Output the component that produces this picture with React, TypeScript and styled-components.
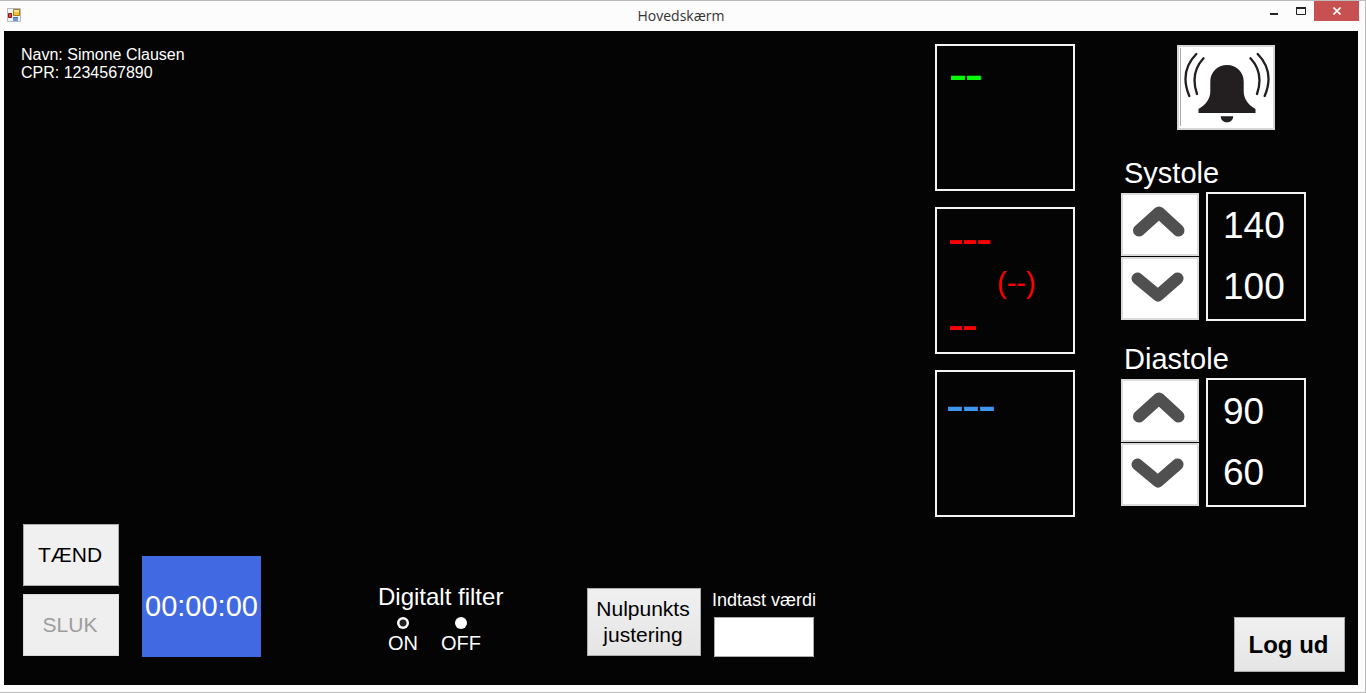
import React, { useState } from "react";
import styled, { createGlobalStyle } from "styled-components";

const GlobalStyle = createGlobalStyle`
  *, *::before, *::after { box-sizing: border-box; }
  body { margin: 0; background: #fcfcfc; }
  body, button, input { font-family: "Liberation Sans", Arial, sans-serif; }
`;

const Window = styled.div`
  display: flex;
  flex-direction: column;
  min-height: 100vh;
  padding: 0 7px 7px 4px;
  background: #fcfcfc;
  border: solid #bcbcbc;
  border-width: 1px 1px 1px 0;
`;

const TitleBar = styled.header`
  display: grid;
  grid-template-columns: 1fr auto 1fr;
  height: 30px;
  margin-right: -1px;
  padding-left: 3px;
`;

const AppIcon = styled.svg`
  width: 14px;
  height: 14px;
  margin-top: 7px;
`;

const Title = styled.h1`
  margin: 0;
  padding-right: 4px;
  font: 400 14px/30px "Open Sans", "Noto Sans", sans-serif;
  color: #333;
`;

const WindowControls = styled.div`
  display: flex;
  justify-content: flex-end;
`;

const ControlButton = styled.button<{ $close?: boolean }>`
  display: flex;
  align-items: center;
  justify-content: center;
  width: ${(p) => (p.$close ? 45 : 27)}px;
  height: 20px;
  padding: 0;
  border: 0;
  background: ${(p) => (p.$close ? "#c75050" : "transparent")};
`;

const Client = styled.main`
  flex: 1;
  display: flex;
  flex-direction: column;
  justify-content: space-between;
  gap: 6px;
  padding: 13px 13px 13px 17px;
  background: #040404;
  color: #fff;
`;

const Monitor = styled.section`
  display: flex;
  align-items: flex-start;
  padding-right: 39px;
`;

const Patient = styled.div`
  flex: 1;
  padding-top: 2px;
  font-size: 16px;
  line-height: 18px;
`;

const Vitals = styled.div`
  display: flex;
  flex-direction: column;
  gap: 16px;
  margin-right: 46px;
`;

const VitalBox = styled.div<{ $color: string; $top: number; $left: number }>`
  width: 140px;
  height: 147px;
  padding: ${(p) => p.$top}px 0 0 ${(p) => p.$left}px;
  border: 2px solid #f4f4f4;
  color: ${(p) => p.$color};
`;

const Reading = styled.div<{ $size: number }>`
  font-family: Roboto, sans-serif;
  font-size: ${(p) => p.$size}px;
  line-height: 43px;
`;

const MeanReading = styled.div`
  padding-left: 48px;
  font-size: 29px;
  line-height: 43px;
`;

const Limits = styled.div`
  display: flex;
  flex-direction: column;
  width: 185px;
`;

const AlarmButton = styled.button`
  align-self: flex-end;
  width: 98px;
  height: 85px;
  margin: 1px 31px 25px 0;
  padding: 0;
  border: 2px solid #d6d6d6;
  background: #fff;

  svg { display: block; }
`;

const LimitGroup = styled.section`
  & + & { margin-top: 20px; }
`;

const LimitTitle = styled.h2`
  margin: 0 0 1px 3px;
  font-size: 29px;
  font-weight: 400;
  line-height: 36px;
`;

const LimitRow = styled.div`
  display: flex;
  align-items: center;
  justify-content: space-between;
`;

const Stepper = styled.div`
  display: flex;
  flex-direction: column;
  gap: 1px;
`;

const StepButton = styled.button`
  width: 78px;
  height: 63px;
  padding: 0;
  border: 2px solid #dcdcdc;
  background: #fff;

  svg { display: block; }
`;

const LimitBox = styled.div`
  width: 100px;
  height: 129px;
  padding: 1px 0 0 15px;
  border: 2px solid #f4f4f4;
  font-size: 37px;
  line-height: 61px;
`;

const Toolbar = styled.section`
  display: flex;
  align-items: flex-end;
`;

const Controls = styled.div`
  display: flex;
  align-items: flex-end;
  margin-bottom: 15px;
`;

const PowerButtons = styled.div`
  display: flex;
  flex-direction: column;
  gap: 8px;
  margin: 0 23px 1px 2px;
`;

const Button = styled.button<{ $w: number; $h: number }>`
  width: ${(p) => p.$w}px;
  height: ${(p) => p.$h}px;
  padding: 0 2px 0 0;
  border: 1px solid #adadad;
  background: linear-gradient(#f0f0f0, #e5e5e5);
  color: #000;
  font-size: 21px;
  line-height: 26px;

  &:disabled { background: #efefef; border-color: #d9d9d9; color: #9d9d9d; }
`;

const PowerButton = styled(Button)`
  background: #f0f0f0;
`;

const LogoutButton = styled(Button)`
  margin-left: auto;
  font-size: 24px;
  font-weight: 700;
`;

const Timer = styled.time`
  width: 119px;
  height: 101px;
  background: #4169e1;
  font-size: 29px;
  line-height: 101px;
  text-align: center;
`;

const Filter = styled.div`
  width: 128px;
  margin-left: 117px;
`;

const FilterTitle = styled.div`
  font-size: 24px;
  line-height: 30px;
  white-space: nowrap;
`;

const FilterOptions = styled.div`
  display: flex;
  gap: 23px;
  padding: 5px 0 1px 10px;
`;

const Option = styled.label`
  display: flex;
  flex-direction: column;
  align-items: center;
  gap: 1px;
  font-size: 20px;
  line-height: 26px;
`;

const Radio = styled.input`
  appearance: none;
  width: 12px;
  height: 12px;
  margin: 0;
  border-radius: 50%;
  background: #fff;

  &:checked { background: radial-gradient(circle, #222 3px, #fff 4px); }
`;

const ZeroButton = styled(Button)`
  margin: 0 11px 1px 81px;
`;

const Field = styled.div`
  display: flex;
  flex-direction: column;
`;

const FieldLabel = styled.label`
  font-size: 18px;
  line-height: 22px;
  margin-bottom: 6px;
`;

const ValueInput = styled.input`
  width: 100px;
  height: 40px;
  margin-left: 2px;
  border: 1px solid #ababab;
  background: #fff;
  font-size: 21px;
`;

const Bell = () => (
  <svg width="94" height="81" viewBox="0 0 94 81" aria-hidden="true">
    <path d="M1.500 1v78" stroke="#a8a8a8" />
    <path
      fill="#231f20"
      d="M48 18C57.500 18 64.700 25.200 64.700 34.500V44C64.700 52 69 57.500 76.500 62V66H19.500V62C27 57.500 31.300 52 31.300 44V34.500C31.300 25.200 38.500 18 48 18zM41.700 69.200H54.200C54 77.200 42 77.200 41.700 69.200z"
    />
    <g fill="none" stroke="#231f20" strokeWidth="2.300" strokeLinecap="round">
      <path d="M17.300 7C5.500 19 4 34 10.300 49M24.500 11.300C15.500 21 13.500 34 18 47M78.700 7C90.500 19 92 34 85.700 49M71.500 11.300C80.500 21 82.500 34 78 47" />
    </g>
  </svg>
);

const Chevron = ({ down }: { down?: boolean }) => (
  <svg width="74" height="59" viewBox="0 0 74 59" aria-hidden="true">
    <path
      d={down ? "M14.500 19.500L35 36.500L54.500 19.500" : "M16 35.500L36 17.500L55.500 35.500"}
      fill="none"
      stroke="#505050"
      strokeWidth="12"
      strokeLinecap="round"
      strokeLinejoin="round"
    />
  </svg>
);

type LimitProps = { name: string; high: number; low: number };

function Limit({ name, high, low }: LimitProps) {
  const [offset, setOffset] = useState(0);
  return (
    <LimitGroup>
      <LimitTitle>{name}</LimitTitle>
      <LimitRow>
        <Stepper>
          <StepButton aria-label={`${name} op`} onClick={() => setOffset(offset + 1)}>
            <Chevron />
          </StepButton>
          <StepButton aria-label={`${name} ned`} onClick={() => setOffset(offset - 1)}>
            <Chevron down />
          </StepButton>
        </Stepper>
        <LimitBox>
          <div>{high + offset}</div>
          <div>{low + offset}</div>
        </LimitBox>
      </LimitRow>
    </LimitGroup>
  );
}

export default function App() {
  return (
    <Window>
      <GlobalStyle />
      <TitleBar>
        <AppIcon viewBox="0 0 14 14" aria-hidden="true">
          <path d="M.5 .5h13v13H.5z" fill="#f4f4f6" stroke="#b5b9c2" />
          <path d="M6.500 1.500h6v6h-6z" fill="#f5c63c" stroke="#a87a12" />
          <path d="M7 2h5v2H7z" fill="#fbe7a0" />
          <path d="M1.500 5.500h3v4h-3z" fill="#e04a3c" stroke="#8f1616" />
          <path d="M6 9h5v4H6z" fill="#6d98d8" />
          <path d="M6 9h5v1H6z" fill="#4473bb" />
        </AppIcon>
        <Title>Hovedskærm</Title>
        <WindowControls>
          <ControlButton aria-label="Minimer">
            <svg width="10" height="10"><path d="M1 7h8v2H1z" fill="#222" /></svg>
          </ControlButton>
          <ControlButton aria-label="Maksimer">
            <svg width="10" height="8">
              <path d="M.5 1v6.500h9V1" fill="none" stroke="#222" />
              <path d="M0 0h10v2H0z" fill="#222" />
            </svg>
          </ControlButton>
          <ControlButton $close aria-label="Luk">
            <svg width="8" height="8"><path d="M.5 .5l7 7M7.500 .5l-7 7" stroke="#fff" strokeWidth="1.600" /></svg>
          </ControlButton>
        </WindowControls>
      </TitleBar>

      <Client>
        <Monitor>
          <Patient>
            <div>Navn: Simone Clausen</div>
            <div>CPR: 1234567890</div>
          </Patient>
          <Vitals>
            <VitalBox $color="#00ff00" $top={8} $left={13}>
              <Reading $size={58}>--</Reading>
            </VitalBox>
            <VitalBox $color="#ff0000" $top={10} $left={12}>
              <Reading $size={51}>---</Reading>
              <MeanReading>(--)</MeanReading>
              <Reading $size={51}>--</Reading>
            </VitalBox>
            <VitalBox $color="#3f96ee" $top={13} $left={10}>
              <Reading $size={58}>---</Reading>
            </VitalBox>
          </Vitals>
          <Limits>
            <AlarmButton aria-label="Alarm">
              <Bell />
            </AlarmButton>
            <Limit name="Systole" high={140} low={100} />
            <Limit name="Diastole" high={90} low={60} />
          </Limits>
        </Monitor>

        <Toolbar>
          <Controls>
            <PowerButtons>
              <PowerButton $w={96} $h={62}>TÆND</PowerButton>
              <PowerButton $w={96} $h={62} disabled>SLUK</PowerButton>
            </PowerButtons>
            <Timer>00:00:00</Timer>
            <Filter role="radiogroup" aria-labelledby="filter-title">
              <FilterTitle id="filter-title">Digitalt filter</FilterTitle>
              <FilterOptions>
                <Option>
                  <Radio type="radio" name="filter" value="on" defaultChecked />
                  ON
                </Option>
                <Option>
                  <Radio type="radio" name="filter" value="off" />
                  OFF
                </Option>
              </FilterOptions>
            </Filter>
            <ZeroButton $w={114} $h={68}>
              Nulpunkts
              <br />
              justering
            </ZeroButton>
            <Field>
              <FieldLabel htmlFor="value">Indtast værdi</FieldLabel>
              <ValueInput id="value" type="text" />
            </Field>
          </Controls>
          <LogoutButton $w={111} $h={55}>Log ud</LogoutButton>
        </Toolbar>
      </Client>
    </Window>
  );
}
